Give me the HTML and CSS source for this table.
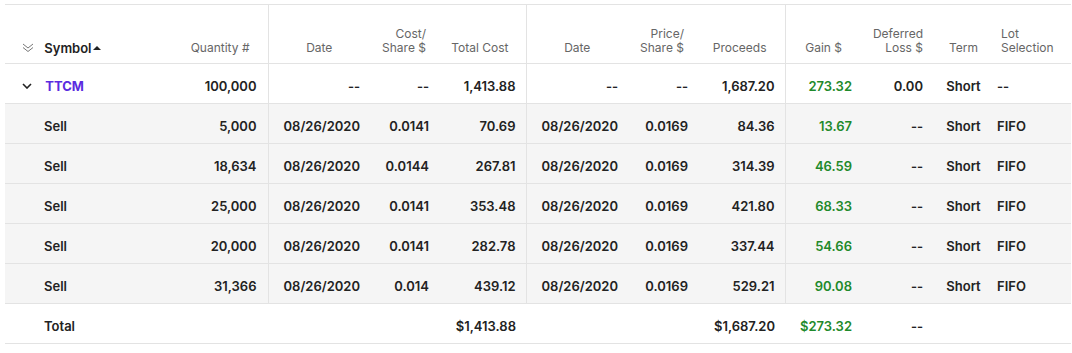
FILE: index.html
```html
<!DOCTYPE html>
<html lang="en">
<head>
  <meta charset="UTF-8">
  <title>Realized Lots</title>
  <link rel="stylesheet" href="styles.css">
</head>
<body>

  <table class="lots">
    <colgroup>
      <col style="width: 165px">
      <col style="width: 98px">
      <col style="width: 102px">
      <col style="width: 69px">
      <col style="width: 87px">
      <col style="width: 102px">
      <col style="width: 70px">
      <col style="width: 87px">
      <col style="width: 77px">
      <col style="width: 71px">
      <col style="width: 61px">
      <col style="width: 77px">
    </colgroup>
    <thead>
      <tr>
        <th class="sym">
          <svg class="expand-all" width="12" height="10" viewBox="0 0 12 10">
            <polyline points="1,1 6,5 11,1" />
            <polyline points="1,4.5 6,8.5 11,4.5" />
          </svg>
          <span class="sym-label">Symbol</span><span class="sort-up"></span>
        </th>
        <th class="qty sep">Quantity #</th>
        <th class="date">Date</th>
        <th class="cps">Cost/<br>Share $</th>
        <th class="tc sep">Total Cost</th>
        <th class="date">Date</th>
        <th class="pps">Price/<br>Share $</th>
        <th class="proc sep">Proceeds</th>
        <th class="gain">Gain $</th>
        <th class="def">Deferred<br>Loss $</th>
        <th class="term">Term</th>
        <th class="lot">Lot<br>Selection</th>
      </tr>
    </thead>
    <tbody>
      <tr class="group">
        <td class="sym">
          <svg class="row-toggle" width="10" height="6" viewBox="0 0 10 6">
            <polyline points="1,1 5,5 9,1" />
          </svg>
          <a class="ticker" href="#">TTCM</a>
        </td>
        <td class="qty sep">100,000</td>
        <td class="date">--</td>
        <td class="num">--</td>
        <td class="num sep">1,413.88</td>
        <td class="date">--</td>
        <td class="num">--</td>
        <td class="num sep">1,687.20</td>
        <td class="num up">273.32</td>
        <td class="num">0.00</td>
        <td class="term">Short</td>
        <td class="lot">--</td>
      </tr>
      <tr class="lot-row">
        <td class="sym indent">Sell</td>
        <td class="qty sep">5,000</td>
        <td class="date">08/26/2020</td>
        <td class="num">0.0141</td>
        <td class="num sep">70.69</td>
        <td class="date">08/26/2020</td>
        <td class="num">0.0169</td>
        <td class="num sep">84.36</td>
        <td class="num up">13.67</td>
        <td class="num">--</td>
        <td class="term">Short</td>
        <td class="lot">FIFO</td>
      </tr>
      <tr class="lot-row">
        <td class="sym indent">Sell</td>
        <td class="qty sep">18,634</td>
        <td class="date">08/26/2020</td>
        <td class="num">0.0144</td>
        <td class="num sep">267.81</td>
        <td class="date">08/26/2020</td>
        <td class="num">0.0169</td>
        <td class="num sep">314.39</td>
        <td class="num up">46.59</td>
        <td class="num">--</td>
        <td class="term">Short</td>
        <td class="lot">FIFO</td>
      </tr>
      <tr class="lot-row">
        <td class="sym indent">Sell</td>
        <td class="qty sep">25,000</td>
        <td class="date">08/26/2020</td>
        <td class="num">0.0141</td>
        <td class="num sep">353.48</td>
        <td class="date">08/26/2020</td>
        <td class="num">0.0169</td>
        <td class="num sep">421.80</td>
        <td class="num up">68.33</td>
        <td class="num">--</td>
        <td class="term">Short</td>
        <td class="lot">FIFO</td>
      </tr>
      <tr class="lot-row">
        <td class="sym indent">Sell</td>
        <td class="qty sep">20,000</td>
        <td class="date">08/26/2020</td>
        <td class="num">0.0141</td>
        <td class="num sep">282.78</td>
        <td class="date">08/26/2020</td>
        <td class="num">0.0169</td>
        <td class="num sep">337.44</td>
        <td class="num up">54.66</td>
        <td class="num">--</td>
        <td class="term">Short</td>
        <td class="lot">FIFO</td>
      </tr>
      <tr class="lot-row">
        <td class="sym indent">Sell</td>
        <td class="qty sep">31,366</td>
        <td class="date">08/26/2020</td>
        <td class="num">0.014</td>
        <td class="num sep">439.12</td>
        <td class="date">08/26/2020</td>
        <td class="num">0.0169</td>
        <td class="num sep">529.21</td>
        <td class="num up">90.08</td>
        <td class="num">--</td>
        <td class="term">Short</td>
        <td class="lot">FIFO</td>
      </tr>
    </tbody>
    <tfoot>
      <tr class="total">
        <td class="sym indent">Total</td>
        <td></td>
        <td></td>
        <td></td>
        <td class="num">$1,413.88</td>
        <td></td>
        <td></td>
        <td class="num">$1,687.20</td>
        <td class="num up">$273.32</td>
        <td class="num">--</td>
        <td></td>
        <td></td>
      </tr>
    </tfoot>
  </table>

</body>
</html>
```

FILE: styles.css
```css
body {
  margin: 4px 0 0 5px;
  font-family: 'Inter', 'Liberation Sans', sans-serif;
  color: #222;
  background: #fff;
}

.lots {
  width: 1066px;
  border-collapse: collapse;
  table-layout: fixed;
  font-size: 13px;
}

/* header */
.lots th {
  height: 50px;
  padding: 0 10px 8px 0;
  vertical-align: bottom;
  text-align: right;
  font-size: 12px;
  font-weight: 400;
  line-height: 14px;
  color: #666;
  border-top: 1px solid #e3e3e3;
  border-bottom: 1px solid #e3e3e3;
}

.lots th.sym {
  text-align: left;
  padding-left: 17px;
  color: #222;
  font-size: 13px;
  font-weight: 600;
}

.expand-all {
  fill: none;
  stroke: #777;
  stroke-width: 1;
  margin-right: 7px;
  vertical-align: 0;
}

.sort-up {
  display: inline-block;
  width: 0;
  height: 0;
  margin-left: 1px;
  border-left: 4px solid transparent;
  border-right: 4px solid transparent;
  border-bottom: 4px solid #222;
  vertical-align: 3px;
}

.lots th.qty { padding-right: 18px; }
.lots th.cps { padding-right: 13px; }
.lots th.tc { padding-right: 17px; }
.lots th.pps { padding-right: 14px; }
.lots th.proc { padding-right: 18px; }
.lots th.gain { padding-right: 20px; }
.lots th.date,
.lots th.term { text-align: center; padding-right: 0; }
.lots th.lot { text-align: left; padding-left: 7px; padding-right: 0; }

/* body */
.lots td {
  height: 35px;
  padding: 4px 10px 0 0;
  text-align: right;
  font-weight: 600;
  white-space: nowrap;
  border-bottom: 1px solid #e3e3e3;
}

.lots td.sym {
  text-align: left;
  padding-left: 17px;
}

.lots td.indent { padding-left: 39px; }
.lots td.qty { padding-right: 11px; }
.lots td.term { text-align: center; padding-right: 0; }
.lots td.lot { text-align: left; padding-left: 3px; }

.sep { border-right: 1px solid #e3e3e3; }

.row-toggle {
  fill: none;
  stroke: #222;
  stroke-width: 1.6;
  margin-right: 10px;
  vertical-align: 2px;
}

.ticker {
  color: #5a2be0;
  text-decoration: none;
  font-weight: 700;
}

.up { color: #1f8a2b; }

.lot-row td { background: #f5f5f5; }

.total td { background: #fff; }
```
